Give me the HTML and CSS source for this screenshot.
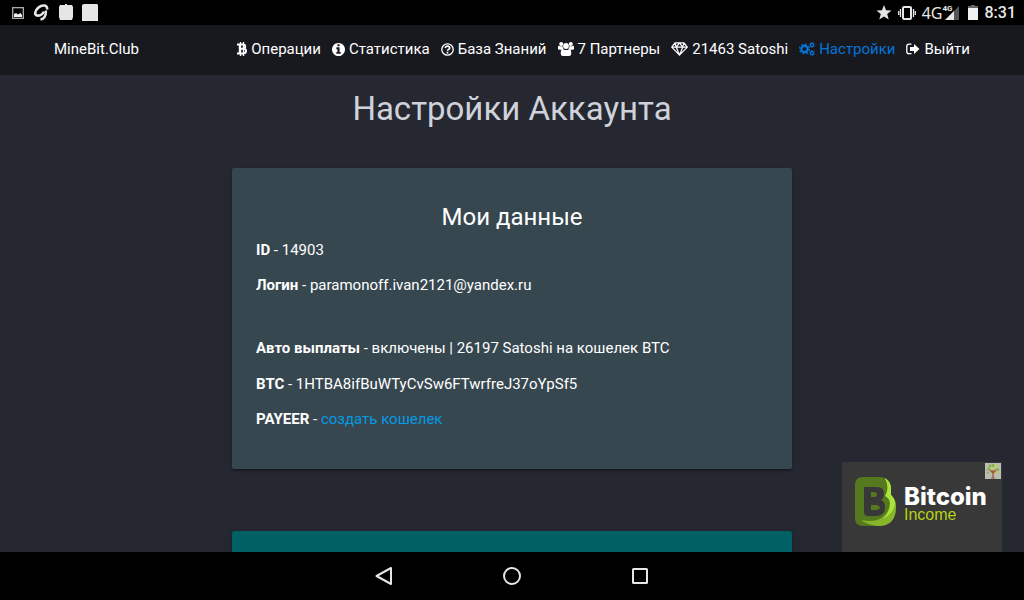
FILE: index.html
```html
<!DOCTYPE html>
<html lang="ru">
<head>
    <meta charset="utf-8">
    <meta name="viewport" content="width=device-width, initial-scale=1">
    <title>Настройки Аккаунта</title>
    <link rel="stylesheet" href="styles.css">
</head>
<body>

<div class="status-bar">
    <div class="status-left">
        <svg width="12" height="12" viewBox="0 0 12 12"><rect x=".7" y=".7" width="10.6" height="10.6" fill="none" stroke="#bbb" stroke-width="1.2"/><path d="M2 10V7l2-1 2 1.500L8.500 6 10 8v2z" fill="#eee"/></svg>
        <svg width="17" height="17" viewBox="0 0 17 17" fill="none" stroke="#e6e6e6"><path d="M14 5.500C15 .5 9 .5 5.500 3.500S1 11 4 11.500s5.500-1 7-4" stroke-width="2.600"/><path d="M13 6.500c0 5-2 8.500-5.500 9" stroke-width="2.400"/></svg>
        <svg width="14" height="17" viewBox="0 0 14 17" fill="#e6e6e6"><path d="M1 1h5V0h2v1h5l1 2v10l-1 3H1l-1-3V3z"/></svg>
        <svg width="16" height="17" viewBox="0 0 16 17" fill="#e6e6e6"><path d="M0 1 2 0h13l1 1v16H0z"/></svg>
    </div>
    <div class="status-right">
        <svg class="star" width="16" height="15" viewBox="0 0 16 15" fill="#e6e6e6"><path d="m8 0 2 5.300 5.500.3-4.300 3.500 1.500 5.500L8 11.500l-4.700 3.100 1.500-5.500L.5 5.600 6 5.300z"/></svg>
        <svg class="vibrate" width="18" height="14" viewBox="0 0 18 14" fill="none" stroke="#e6e6e6"><rect x="5" y="1" width="8" height="12" rx="1" stroke-width="2"/><path d="M2.500 3v8M.7 5v4M15.500 3v8M17.300 5v4" stroke-width="1.300"/></svg>
        <span class="net">4G</span>
        <span class="signal"><svg width="14" height="14" viewBox="0 0 14 14"><path d="M14 0v14H0z" fill="#555"/><path d="M9 5v9H0z" fill="#e6e6e6"/></svg><span class="net-small">4G</span></span>
        <svg class="battery" width="10" height="15" viewBox="0 0 10 15"><path d="M3 0h4v1h3v3H0V1h3z" fill="#666"/><path d="M0 3h10v12H0z" fill="#f0f0f0"/></svg>
        <span class="clock">8:31</span>
    </div>
</div>

<nav class="navbar">
    <a class="brand" href="#">MineBit.Club</a>
    <ul class="menu">
        <li><a href="#"><svg width="10" height="14" viewBox="0 0 10 14" fill="none" stroke="currentColor"><path d="M3.500 0v14M6.500 0v14" stroke-width="1.300"/><path d="M0 2.500h6.200q2 0 2 2t-2 2.300H3M6.200 6.800q2.800 0 2.800 2.300t-2.800 2.400H0M2.800 2.500v9" stroke-width="2"/></svg>Операции</a></li>
        <li><a href="#"><svg width="13" height="13" viewBox="128 128 1536 1536" fill="currentColor"><path d="M1152 1376v-160q0-14-9-23t-23-9h-96v-512q0-14-9-23t-23-9h-320q-14 0-23 9t-9 23v160q0 14 9 23t23 9h96v320h-96q-14 0-23 9t-9 23v160q0 14 9 23t23 9h448q14 0 23-9t9-23zm-128-896v-160q0-14-9-23t-23-9h-192q-14 0-23 9t-9 23v160q0 14 9 23t23 9h192q14 0 23-9t9-23zm640 416q0 209-103 385.500t-279.500 279.500-385.500 103-385.500-103-279.500-279.500-103-385.500 103-385.500 279.500-279.500 385.500-103 385.500 103 279.500 279.500 103 385.500z"/></svg>Статистика</a></li>
        <li><a href="#"><svg width="13" height="13" viewBox="0 0 13 13" fill="none" stroke="currentColor"><circle cx="6.500" cy="6.500" r="5.700" stroke-width="1.300"/><path d="M4.200 5q.3-1.800 2.300-1.800T8.700 5q0 .9-1.200 1.500-1 .5-1 1.300M6.500 8.700v1.700" stroke-width="1.700"/></svg>База Знаний</a></li>
        <li><a href="#"><svg width="16" height="14" viewBox="0 0 16 14" fill="currentColor"><circle cx="3.200" cy="2" r="2"/><circle cx="12.800" cy="2" r="2"/><circle cx="8" cy="4" r="2.900"/><path d="M0 7V5q0-1.500 1-1.300 2 1 3.500.3 0 2 1.200 3Q4.500 7 4 7.800H1.500Q0 7.800 0 7zM16 7V5q0-1.500-1-1.300-2 1-3.500.3 0 2-1.200 3 1.200 0 1.700.8h2.500Q16 7.800 16 7zM5 7.200q3 1.800 6 0Q13.300 7 13.300 11.500q0 2.500-2.300 2.500H5q-2.300 0-2.300-2.500Q2.700 7 5 7.200z"/></svg>7 Партнеры</a></li>
        <li><a href="#"><svg width="17" height="14" viewBox="0 0 17 14" fill="none" stroke="currentColor" stroke-width="1.200" stroke-linejoin="round"><path d="M4 .8h9l3.300 4.400-7.800 8L.7 5.200zM.7 5.200h15.600M4 .8l1.300 4.400 3.200 8 3.200-8L13 .8M5.300 5.200 8.500.8l3.200 4.400"/></svg>21463 Satoshi</a></li>
        <li class="active"><a href="#"><svg width="16" height="14" viewBox="0 0 16 14" fill="none" stroke="currentColor"><circle cx="5.500" cy="7" r="3.200" stroke-width="2.200"/><circle cx="5.500" cy="7" r="4.900" stroke-width="1.300" stroke-dasharray="1.900 1.950"/><circle cx="13" cy="3" r="1.600" stroke-width="1.200"/><circle cx="13" cy="3" r="2.500" stroke-width=".9" stroke-dasharray="1.300 1.300"/><circle cx="13" cy="11" r="1.600" stroke-width="1.200"/><circle cx="13" cy="11" r="2.500" stroke-width=".9" stroke-dasharray="1.300 1.300"/></svg>Настройки</a></li>
        <li><a href="#"><svg width="14" height="12" viewBox="0 0 14 12"><path d="M5.500 1.200H3Q.8 1.200.8 3.400v5Q.8 10.600 3 10.600h2.500" fill="none" stroke="currentColor" stroke-width="1.300"/><path d="M4 4h4V1l5.500 5L8 11V8H4z" fill="currentColor"/></svg>Выйти</a></li>
    </ul>
</nav>

<main class="page">
    <h1>Настройки Аккаунта</h1>

    <section class="card">
        <h2>Мои данные</h2>
        <p><b>ID</b> - 14903</p>
        <p><b>Логин</b> - paramonoff.ivan2121@yandex.ru</p>
        <p class="payout"><b>Авто выплаты</b> - включены | 26197 Satoshi на кошелек BTC</p>
        <p><b>BTC</b> - 1HTBA8ifBuWTyCvSw6FTwrfreJ37oYpSf5</p>
        <p><b>PAYEER</b> - <a href="#">создать кошелек</a></p>
    </section>

    <section class="card card-teal"></section>

    <a class="ad" href="#">
        <svg class="ad-logo" width="42" height="50" viewBox="0 0 42 50">
            <path d="M8 0h18q10 1 10 12v6q5 4 5 12 0 19-18 19H8q-8 0-8-8V8q0-8 8-8z" fill="#56791f"/>
            <path d="M30 1q6 4 6 11v6q5 4 5 12 0 19-18 19-11-1-17-6 14 3 22-3 7-6 7-14 0-4-3-7 3-8-2-18z" fill="#86b52a"/>
            <path d="M30 1q6 4 6 11v6q4 4 4 9-2 10-12 15 7-7 7-16 0-4-5-7 5-8 0-18z" fill="#a7e53c"/>
            <path d="M9 10h13q7 0 7 7 0 4-3 6 4 2 4 7 0 9-9 9h-8q-4 0-4-4z" fill="#383838"/>
            <path d="M16 15h4q2 1 2 2.500T20 20h-4zM16 28h6q3 1 3 2.500T22 33h-6z" fill="#56791f"/>
        </svg>
        <span class="ad-text"><b>Bitcoin</b><span>Income</span></span>
        <svg class="ad-badge" width="16" height="16" viewBox="0 0 16 16"><path d="M0 0h16v16H0z" fill="#b9bcb5"/><path d="M8 15V7M6 15h4M8 10 5 7M8 10l3-3" stroke="#a0522d" stroke-width="1.200" fill="none"/><g fill="#7fb53a"><circle cx="3.500" cy="6" r="1.500"/><circle cx="5" cy="3" r="1.400"/><circle cx="8" cy="2.500" r="1.400"/><circle cx="12.500" cy="6.500" r="1.500"/><circle cx="3" cy="9.500" r="1"/></g><g fill="#c9d23c"><circle cx="11" cy="3.500" r="1.400"/><circle cx="7" cy="5.500" r="1.200"/><circle cx="12" cy="9.500" r="1.200"/></g></svg>
    </a>
</main>

<div class="soft-keys">
    <button type="button" aria-label="Назад"><svg width="18" height="20" viewBox="0 0 18 20"><path d="M16 2v16L1.500 10z"/></svg></button>
    <button type="button" aria-label="Домой"><svg width="18" height="18" viewBox="0 0 18 18"><circle cx="9" cy="9" r="8"/></svg></button>
    <button type="button" aria-label="Недавние"><svg width="16" height="16" viewBox="0 0 16 16"><rect x="1" y="1" width="14" height="14" rx=".5"/></svg></button>
</div>

</body>
</html>
```

FILE: styles.css
```css
* {
    box-sizing: border-box;
}

body {
    margin: 0;
    height: 100vh;
    display: flex;
    flex-direction: column;
    overflow: hidden;
    background: #252830;
    color: #fff;
    font-family: Roboto, "Noto Sans", sans-serif;
    font-size: 15px;
    line-height: 20px;
}

a {
    color: #039be5;
    text-decoration: none;
}

svg {
    flex: none;
}

/* device status bar */
.status-bar {
    flex: none;
    display: flex;
    justify-content: space-between;
    align-items: center;
    height: 25px;
    padding: 0 8px 0 12px;
    background: #000;
    color: #e6e6e6;
}

.status-left,
.status-right {
    display: flex;
    align-items: center;
}

.status-left {
    gap: 9px;
}

.vibrate {
    margin: 0 6px;
}

.net {
    font-family: "Noto Sans", sans-serif;
    font-size: 16px;
}

.signal {
    position: relative;
    display: flex;
    margin: 0 9px 0 2px;
}

.net-small {
    position: absolute;
    top: -1px;
    left: -2px;
    font-size: 8px;
    font-weight: bold;
    line-height: 8px;
}

.clock {
    margin-left: 7px;
    font-size: 16px;
    font-weight: 500;
}

/* site navigation */
.navbar {
    flex: none;
    display: flex;
    justify-content: space-between;
    align-items: center;
    height: 50px;
    padding: 0 54px 2px;
    background: #18191f;
}

.navbar a {
    color: #fff;
}

.menu {
    display: flex;
    gap: 11px;
    margin: 0;
    padding: 0;
    list-style: none;
}

.menu a {
    display: flex;
    align-items: center;
    gap: 4px;
    white-space: nowrap;
}

.navbar .active a {
    color: #0275d8;
}

/* content */
.page {
    flex: 1;
    min-height: 0;
    position: relative;
    overflow: hidden;
    padding: 14px 16px 0;
}

h1,
h2 {
    margin: 0;
    font-weight: 400;
    text-align: center;
}

h1 {
    margin-bottom: 39px;
    color: #cfd2da;
    font-size: 33px;
    line-height: 40px;
}

h2 {
    margin-bottom: 10px;
    font-size: 24px;
    line-height: 26px;
}

.card {
    max-width: 560px;
    margin: 0 auto 62px;
    padding: 36px 24px 40px;
    border-radius: 2px;
    background: #37474f;
    box-shadow: 0 2px 2px rgba(0, 0, 0, .14), 0 1px 5px rgba(0, 0, 0, .12), 0 3px 1px -2px rgba(0, 0, 0, .2);
}

.card p {
    margin: 0 0 15px;
}

.card p.payout {
    margin: 43px 0 16px;
}

.card p:last-child {
    margin-bottom: 0;
}

.card-teal {
    min-height: 200px;
    background: #006064;
}

/* banner pinned over the page corner */
.ad {
    position: absolute;
    right: 22px;
    bottom: 0;
    display: flex;
    align-items: flex-start;
    gap: 7px;
    width: 160px;
    height: 90px;
    padding: 15px 13px;
    background: #383838;
}

.ad-text {
    display: flex;
    flex-direction: column;
    padding-top: 10px;
    color: #b5d211;
    font-family: "Liberation Sans", sans-serif;
    font-size: 16px;
    line-height: 16px;
}

.ad-text b {
    color: #fff;
    font-family: Inter, sans-serif;
    font-size: 24px;
    font-weight: 800;
    line-height: 20px;
}

.ad-badge {
    position: absolute;
    top: 1px;
    right: 1px;
}

/* device keys */
.soft-keys {
    flex: none;
    display: flex;
    justify-content: center;
    height: 48px;
    background: #000;
}

.soft-keys button {
    display: flex;
    justify-content: center;
    align-items: center;
    width: 128px;
    padding: 0;
    border: 0;
    background: none;
}

.soft-keys svg {
    fill: none;
    stroke: #e6e6e6;
    stroke-width: 2;
    stroke-linejoin: round;
}
```
